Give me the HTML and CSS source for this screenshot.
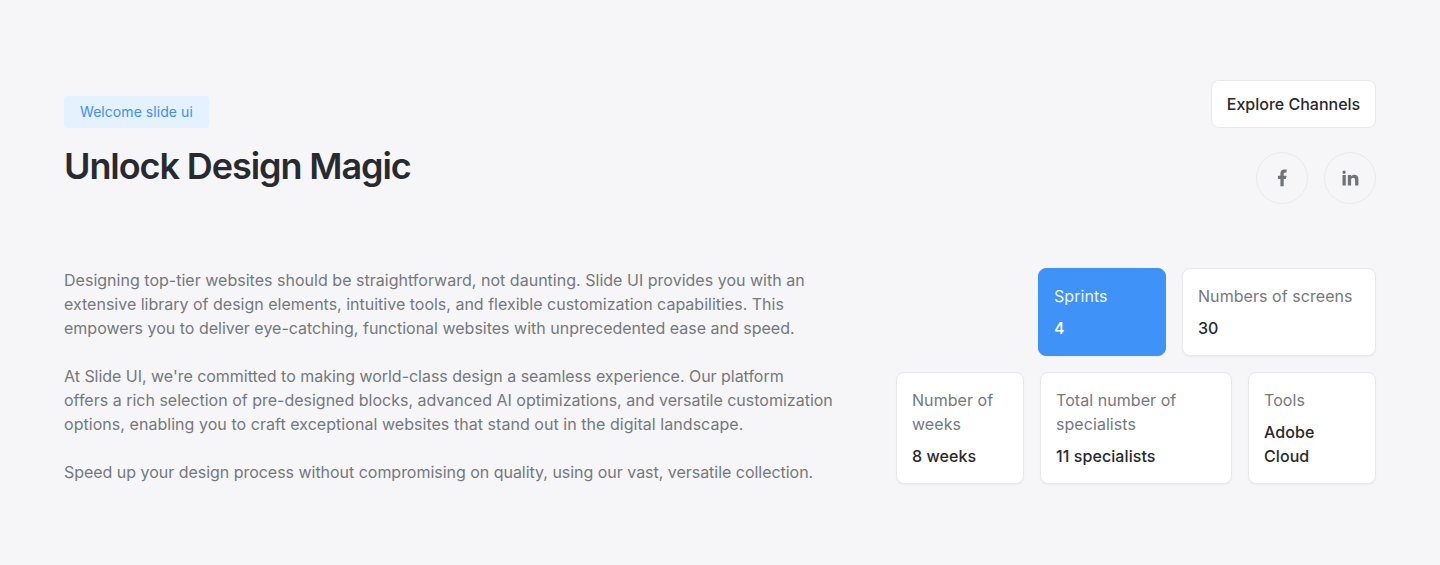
FILE: index.html
```html
<!DOCTYPE html>
<html lang="en">
<head>
<meta charset="utf-8">
<title>Slide UI</title>
<link rel="stylesheet" href="styles.css">
</head>
<body>
<main class="hero">
  <header class="top">
    <div class="intro">
      <span class="badge">Welcome slide ui</span>
      <h1 class="title">Unlock Design Magic</h1>
    </div>
    <div class="actions">
      <a class="explore">Explore Channels</a>
      <div class="socials">
        <a class="social" aria-label="Facebook">
          <svg width="20" height="20" viewBox="0 0 20 20"><path fill="currentColor" d="M11.7 11.1h2.1l.8-3.3h-2.9V6.1c0-.9 0-1.7 1.7-1.7h1.2V1.6c-.3 0-1.300-.1-2.400-.1-2.200 0-3.800 1.400-3.800 3.900v2.400H5.900v3.300h2.500v7.100h3.300z"/></svg>
        </a>
        <a class="social" aria-label="LinkedIn">
          <svg width="20" height="20" viewBox="0 0 20 20"><path fill="currentColor" d="M5.8 4.2a1.700 1.700 0 1 1-3.400 0 1.700 1.700 0 0 1 3.400 0zM5.800 7.100H2.500v10.400h3.300zM11.100 7.100H7.800v10.400h3.300v-5.500c0-3 4-3.300 4 0v5.500h3.300v-6.600c0-5.100-5.900-4.900-7.300-2.400z"/></svg>
        </a>
      </div>
    </div>
  </header>
  <section class="content">
    <div class="copy">
      <p><span class="loose">Designing top-tier websites should be straightforward, not daunting. Slide UI provides you with an</span><br>extensive library of design elements, intuitive tools, and flexible customization capabilities. This<br>empowers you to deliver eye-catching, functional websites with unprecedented ease and speed.</p>
      <p><span class="tight">At Slide UI, we're committed to making world-class design a seamless experience. Our platform</span><br>offers a rich selection of pre-designed blocks, advanced AI optimizations, and versatile customization<br><span class="looser">options, enabling you to craft exceptional websites that stand out in the digital landscape.</span></p>
      <p class="tight">Speed up your design process without compromising on quality, using our vast, versatile collection.</p>
    </div>
    <div class="stats">
      <div class="row">
        <div class="card card-blue"><span class="label">Sprints</span><strong class="value">4</strong></div>
        <div class="card card-screens"><span class="label">Numbers of screens</span><strong class="value">30</strong></div>
      </div>
      <div class="row">
        <div class="card"><span class="label">Number of weeks</span><strong class="value">8 weeks</strong></div>
        <div class="card card-wide"><span class="label">Total number of specialists</span><strong class="value">11 specialists</strong></div>
        <div class="card"><span class="label">Tools</span><strong class="value">Adobe Cloud</strong></div>
      </div>
    </div>
  </section>
</main>
</body>
</html>
```
FILE: styles.css
```css
* { box-sizing: border-box; }
body { margin: 0; background: #f6f6f8; font-family: Inter, "Liberation Sans", sans-serif; font-size: 16px; line-height: 24px; color: #27292d; }
.hero { height: 565px; padding: 80px 64px; }
.top { display: flex; justify-content: space-between; height: 188px; }
.intro { padding-top: 16px; }
.badge { display: block; width: 145px; height: 32px; padding: 0 16px; border-radius: 4px; background: #e4f2ff; color: #3e8ff3; font-size: 14px; line-height: 32px; font-weight: 400; letter-spacing: .06px; white-space: nowrap; }
.title { margin: 14px 0 0; font-size: 36px; line-height: 48px; font-weight: 600; letter-spacing: -1.08px; white-space: nowrap; color: #272b30; }
.actions { display: flex; flex-direction: column; align-items: flex-end; gap: 24px; }
.explore { width: 165px; height: 48px; border: 1px solid #e9e9ec; border-radius: 8px; background: #fff; font-weight: 500; line-height: 46px; text-align: center; }
.socials { display: flex; gap: 16px; }
.social { display: flex; align-items: center; justify-content: center; width: 52px; height: 52px; border: 1px solid #e9e9ec; border-radius: 50%; color: #70737a; }
.content { display: flex; justify-content: space-between; }
.copy { width: 780px; color: #75787d; white-space: nowrap; }
.copy p { margin: 0 0 24px; }
.loose { letter-spacing: .02px; }
.looser { letter-spacing: .045px; }
.tight { letter-spacing: -.027px; }
.stats { display: flex; flex-direction: column; gap: 16px; width: 480px; }
.row { display: flex; justify-content: flex-end; gap: 16px; }
.card { display: flex; flex-direction: column; gap: 8px; width: 128px; padding: 15px; border: 1px solid #e9e9ec; border-radius: 8px; background: #fff; box-shadow: 0 1px 2px rgba(16, 24, 40, .04); }
.card-blue { height: 88px; background: #3e92f8; border-color: #3e92f8; color: #fff; }
.card-screens { width: 194px; }
.card-wide { width: 192px; }
.label { color: #75787d; letter-spacing: .06px; }
.card-blue .label { color: #f0f7ff; }
.value { font-weight: 500; letter-spacing: .08px; }
```
